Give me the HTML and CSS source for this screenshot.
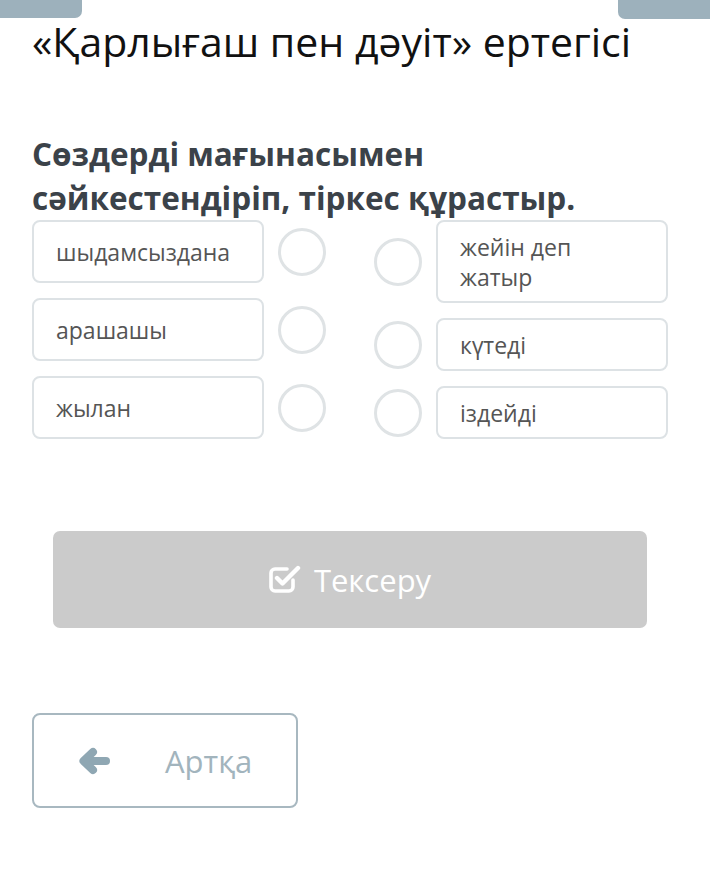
FILE: index.html
```html
<!DOCTYPE html>
<html lang="kk">
<head>
<meta charset="utf-8">
<title>Қарлығаш пен дәуіт</title>
<link rel="stylesheet" href="styles.css">
</head>
<body>
<div class="tab tab-left"></div>
<div class="tab tab-right"></div>
<main class="page">
  <h1 class="title">«Қарлығаш пен дәуіт» ертегісі</h1>
  <h2 class="task">Сөздерді мағынасымен сәйкестендіріп, тіркес құрастыр.</h2>
  <div class="match">
    <div class="col col-left">
      <div class="row"><div class="card card-l">шыдамсыздана</div><span class="dot"></span></div>
      <div class="row"><div class="card card-l">арашашы</div><span class="dot"></span></div>
      <div class="row"><div class="card card-l">жылан</div><span class="dot"></span></div>
    </div>
    <div class="col col-right">
      <div class="row"><span class="dot"></span><div class="card card-r">жейін деп<br>жатыр</div></div>
      <div class="row"><span class="dot"></span><div class="card card-r">күтеді</div></div>
      <div class="row"><span class="dot"></span><div class="card card-r">іздейді</div></div>
    </div>
  </div>
  <button class="check-btn" type="button">
    <svg class="check-icon" viewBox="0 0 32 30" width="32" height="30" aria-hidden="true">
      <path d="M24 16 V23 a4 4 0 0 1 -4 4 H6 a4 4 0 0 1 -4 -4 V9 a4 4 0 0 1 4 -4 H18" fill="none" stroke="#fff" stroke-width="3.6" stroke-linecap="round"/>
      <path d="M8 14 L13.5 19.5 L29 4" fill="none" stroke="#fff" stroke-width="4.4" stroke-linecap="round" stroke-linejoin="round"/>
    </svg>
    <span>Тексеру</span>
  </button>
  <button class="back-btn" type="button">
    <svg class="back-icon" viewBox="0 0 32 28" width="32" height="28" aria-hidden="true">
      <path d="M7 14 H28" stroke="#8fa7b3" stroke-width="8" stroke-linecap="round"/>
      <path d="M15 5 L5.5 14 L15 23" fill="none" stroke="#8fa7b3" stroke-width="8" stroke-linecap="round" stroke-linejoin="round"/>
    </svg>
    <span>Артқа</span>
  </button>
</main>
</body>
</html>
```
FILE: styles.css
```css
* { box-sizing: border-box; }
html, body { margin: 0; padding: 0; background: #fff; }
body {
  font-family: "Open Sans", "Noto Sans", sans-serif;
  width: 710px;
  height: 880px;
  overflow: hidden;
  position: relative;
}
.tab {
  position: absolute;
  top: 0;
  height: 18px;
  background: #9db1bc;
}
.tab-left { left: 0; width: 82px; border-bottom-right-radius: 7px; }
.tab-right { right: 0; width: 92px; height: 19px; border-bottom-left-radius: 7px; }

.page {
  padding: 13px 42px 0 32px;
}
.title {
  margin: 0;
  font-weight: 400;
  font-size: 41px;
  line-height: 56px;
  color: #111;
}
.task {
  margin: 63px 0 0;
  max-width: 590px;
  font-weight: 700;
  font-size: 31.5px;
  line-height: 44px;
  color: #3b4249;
}
.match {
  display: flex;
  gap: 48px;
  margin-top: 0;
}
.col {
  display: flex;
  flex-direction: column;
}
.col-left { gap: 15px; }
.col-right { gap: 15px; }
.row {
  display: flex;
  align-items: center;
  gap: 14px;
}
.card {
  width: 232px;
  border: 2px solid #dde2e5;
  border-radius: 8px;
  font-size: 23px;
  line-height: 30px;
  color: #555;
  padding: 0 18px 0 22px;
}
.card-l { padding-top: 14.5px; padding-bottom: 14.5px; }
.card-r { padding-top: 9.5px; padding-bottom: 9.5px; }
.dot {
  width: 48px;
  height: 48px;
  border: 3px solid #dfe3e5;
  border-radius: 50%;
  flex: none;
}
.check-btn {
  display: flex;
  align-items: center;
  justify-content: center;
  gap: 13px;
  width: 594px;
  height: 97px;
  margin: 92px 0 0 21px;
  border: 0;
  border-radius: 7px;
  background: #cbcbcb;
  color: #fff;
  font-family: "Open Sans", "Noto Sans", sans-serif;
  font-size: 31px;
  padding: 0;
}
.check-icon { display: block; margin-top: -2px; }
.back-btn {
  display: flex;
  align-items: center;
  width: 266px;
  height: 95px;
  margin-top: 85px;
  border: 2px solid #a8b8c0;
  border-radius: 8px;
  background: #fff;
  color: #a2b4bd;
  font-family: "Open Sans", "Noto Sans", sans-serif;
  font-size: 31px;
  padding: 0 0 0 44px;
}
.back-icon { display: block; margin-right: 55px; }
```
